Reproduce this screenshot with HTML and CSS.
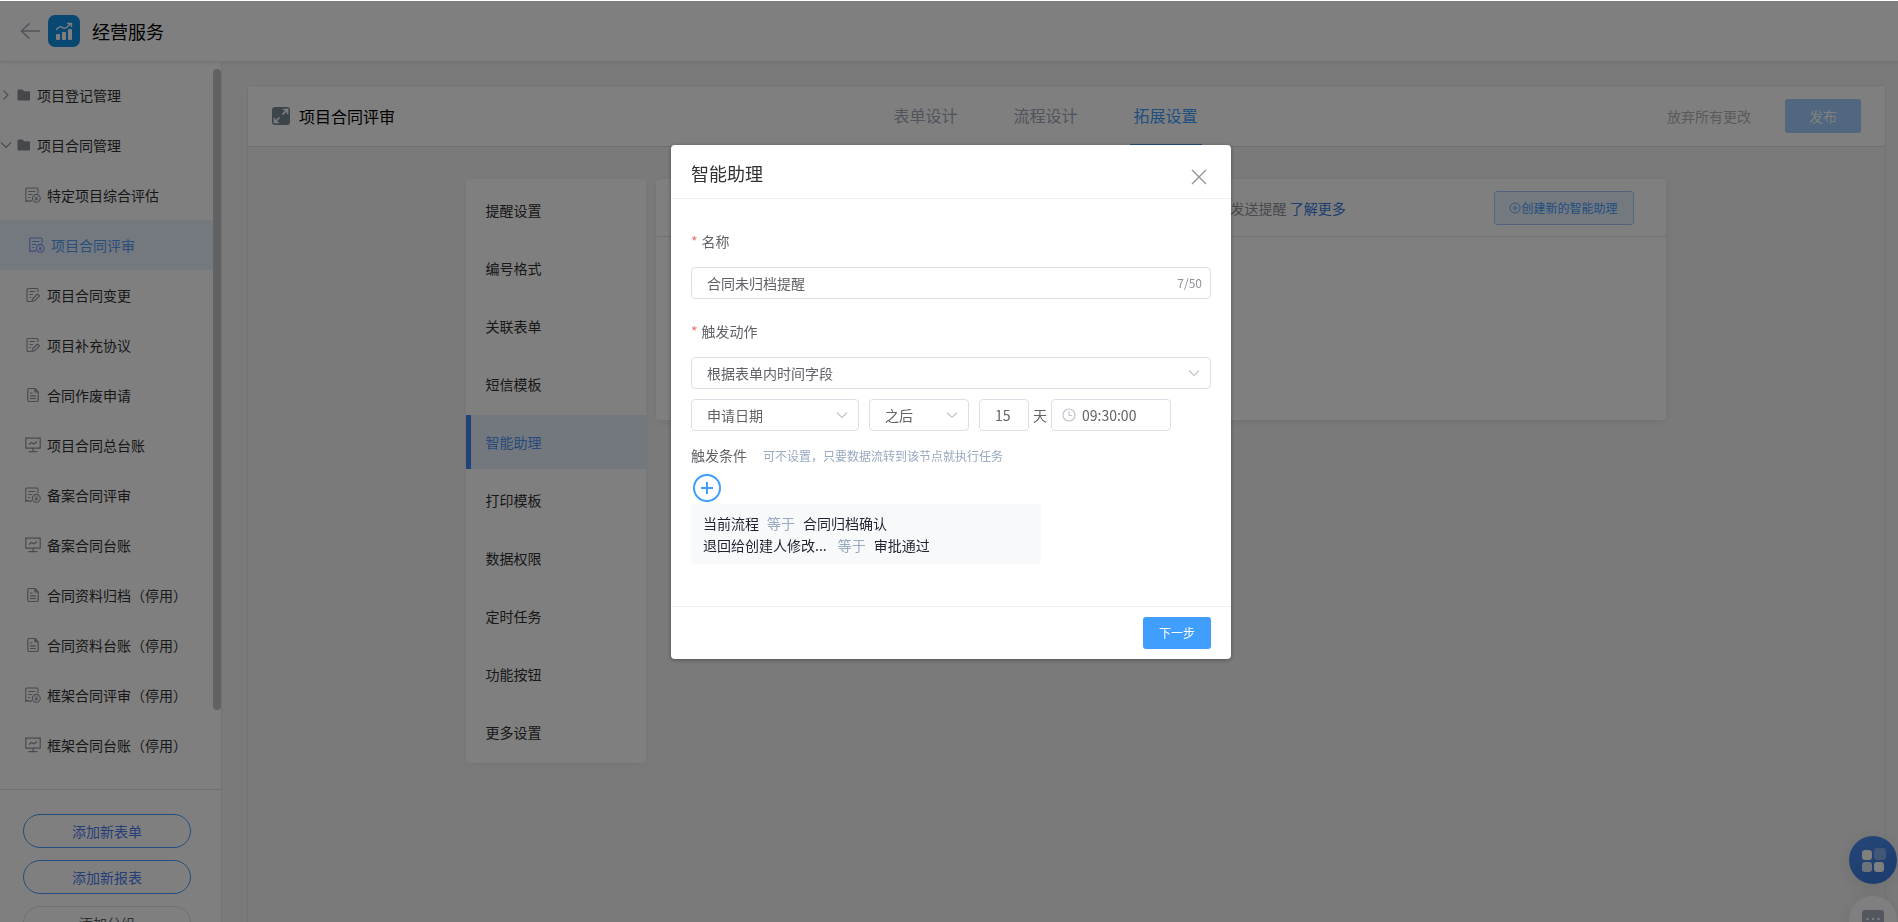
FILE: index.html
```html
<!DOCTYPE html>
<html lang="zh-CN">
<head>
<meta charset="utf-8">
<title>经营服务</title>
<link rel="stylesheet" href="styles.css">
</head>
<body>
<svg class="sprite" aria-hidden="true">
  <symbol id="i-folder" viewBox="0 0 14 14"><path fill="currentColor" d="M1 1.500h4.500l1.600 1.700H12q1 0 1 1V11.500q0 1-1 1H1.500q-1 0-1-1V2.500q0-1 1-1z"/></symbol>
  <symbol id="i-bill" viewBox="0 0 16 16"><g fill="none" stroke="currentColor" stroke-width="1.100"><path d="M13 6.500V2q0-1-1-1H1.800q-1 0-1 1v12.500l1.600-.8 1.600.8 1.600-.8 1.400.6M3.300 4.500h7M3.300 7.500h4M3.300 10.500h2"/><circle cx="11.300" cy="11.300" r="3.900"/><path d="M9.800 9.200l1.500 1.700 1.500-1.700M11.300 11v2.600M9.800 11.300h3M9.800 12.500h3" stroke-width=".8"/></g></symbol>
  <symbol id="i-edit" viewBox="0 0 16 16"><g fill="none" stroke="currentColor" stroke-width="1.100" stroke-linejoin="round"><path d="M13 5V2.500q0-1-1-1H3q-1 0-1 1v11q0 1 1 1h3.500M4.500 4.500H10M4.500 7.500H8M4.500 10.500H6"/><path d="M12.500 7l2 1.800-5 5-2.600.7.600-2.500z"/></g></symbol>
  <symbol id="i-doc" viewBox="0 0 16 16"><g fill="none" stroke="currentColor" stroke-width="1.200" stroke-linejoin="round"><path d="M10 1.500H4q-1.200 0-1.200 1.200v10.600q0 1.200 1.200 1.200h8q1.200 0 1.200-1.200V5zM10 1.500V5h3.200M5 6h2.500M5 8.800h6M5 11.500h6"/></g></symbol>
  <symbol id="i-board" viewBox="0 0 16 16"><g fill="none" stroke="currentColor" stroke-width="1.200"><path d="M.8 1.200h14.400v10H.8zM8 11.200v3.500M3.500 14.700h9M4 7.500l2.500-2 2.500 1.500 3-2.500"/></g></symbol>
  <symbol id="i-down" viewBox="0 0 12 12"><path fill="none" stroke="currentColor" stroke-width="1.200" d="M1 3.500l5 5 5-5"/></symbol>
  <symbol id="i-right" viewBox="0 0 12 12"><path fill="none" stroke="currentColor" stroke-width="1.100" d="M3.500 1.500L8 6l-4.500 4.500"/></symbol>
</svg>

<div class="app">
  <header class="topbar">
    <button class="back" aria-label="返回"><svg viewBox="0 0 22 18"><path fill="none" stroke="currentColor" stroke-width="1.500" d="M21 9H1.500M10 1L1.500 9l8.500 8"/></svg></button>
    <svg class="logo" viewBox="0 0 32 32" aria-hidden="true"><rect width="32" height="32" rx="7" fill="#1090e6"/><g fill="#fff"><rect x="8" y="19" width="4" height="6" rx="1"/><rect x="14" y="17" width="4" height="8" rx="1"/><rect x="20" y="14" width="4" height="11" rx="1"/></g><path d="M8 15q4-5 6.500-2.500T22.500 9M19 8.500h4.500V12" fill="none" stroke="#fff" stroke-width="1.300"/></svg>
    <h1>经营服务</h1>
  </header>

  <div class="body">
    <aside class="side">
      <nav class="tree">
        <a class="group" href="#"><svg class="arrow"><use href="#i-right"/></svg><svg class="fold"><use href="#i-folder"/></svg>项目登记管理</a>
        <a class="group" href="#"><svg class="arrow"><use href="#i-down"/></svg><svg class="fold"><use href="#i-folder"/></svg>项目合同管理</a>
        <a class="leaf" href="#"><svg><use href="#i-bill"/></svg>特定项目综合评估</a>
        <a class="leaf current" href="#"><svg><use href="#i-bill"/></svg>项目合同评审</a>
        <a class="leaf" href="#"><svg><use href="#i-edit"/></svg>项目合同变更</a>
        <a class="leaf" href="#"><svg><use href="#i-edit"/></svg>项目补充协议</a>
        <a class="leaf" href="#"><svg><use href="#i-doc"/></svg>合同作废申请</a>
        <a class="leaf" href="#"><svg><use href="#i-board"/></svg>项目合同总台账</a>
        <a class="leaf" href="#"><svg><use href="#i-bill"/></svg>备案合同评审</a>
        <a class="leaf" href="#"><svg><use href="#i-board"/></svg>备案合同台账</a>
        <a class="leaf" href="#"><svg><use href="#i-doc"/></svg>合同资料归档（停用）</a>
        <a class="leaf" href="#"><svg><use href="#i-doc"/></svg>合同资料台账（停用）</a>
        <a class="leaf" href="#"><svg><use href="#i-bill"/></svg>框架合同评审（停用）</a>
        <a class="leaf" href="#"><svg><use href="#i-board"/></svg>框架合同台账（停用）</a>
        <span class="thumb"></span>
      </nav>
      <div class="adders">
        <button>添加新表单</button>
        <button>添加新报表</button>
        <button class="plain">添加分组</button>
      </div>
    </aside>

    <main class="main">
      <section class="sheet">
        <header class="sheet-head">
          <div class="sheet-title">
            <svg viewBox="0 0 18 18" aria-hidden="true"><rect width="18" height="18" rx="3" fill="#7a8a99"/><path d="M10.500 7.500L15 3M11 2.500h4.500V7M7.500 10.500L3 15M2.500 11v4.500H7" fill="none" stroke="#fff" stroke-width="1.600"/></svg>
            <h2>项目合同评审</h2>
          </div>
          <nav class="tabs">
            <a href="#">表单设计</a><a href="#">流程设计</a><a class="on" href="#">拓展设置</a>
          </nav>
          <div class="sheet-actions">
            <button class="discard">放弃所有更改</button>
            <button class="publish">发布</button>
          </div>
        </header>
        <div class="content">
          <nav class="settings">
            <a href="#">提醒设置</a><a href="#">编号格式</a><a href="#">关联表单</a><a href="#">短信模板</a><a class="on" href="#">智能助理</a><a href="#">打印模板</a><a href="#">数据权限</a><a href="#">定时任务</a><a href="#">功能按钮</a><a href="#">更多设置</a>
          </nav>
          <section class="panel">
            <header>
              <p>发送提醒 <a href="#">了解更多</a></p>
              <button><svg viewBox="0 0 12 12" aria-hidden="true"><g fill="none" stroke="currentColor" stroke-width=".8"><circle cx="6" cy="6" r="5"/><path d="M6 3.500v5M3.500 6h5"/></g></svg>创建新的智能助理</button>
            </header>
          </section>
        </div>
      </section>
    </main>
  </div>

  <div class="floats">
    <button class="apps" aria-label="应用"><svg viewBox="0 0 48 48"><g fill="#fff"><rect x="13" y="14" width="10" height="10" rx="3"/><rect x="25" y="12" width="12" height="12" rx="3" opacity=".35"/><rect x="13" y="26" width="10" height="10" rx="3" opacity=".8"/><rect x="25" y="26" width="10" height="10" rx="3"/></g></svg></button>
    <button class="chat" aria-label="消息"><svg viewBox="0 0 48 48"><rect x="13" y="14" width="22" height="20" rx="3" fill="#a6aebf"/><g fill="#fff"><circle cx="18.500" cy="23" r="1.200"/><circle cx="24" cy="23" r="1.200"/><circle cx="29.500" cy="23" r="1.200"/></g></svg></button>
  </div>
</div>

<div class="mask">
  <form class="dialog" role="dialog" aria-labelledby="dlg-title">
    <header>
      <h2 id="dlg-title">智能助理</h2>
      <button type="button" class="close" aria-label="关闭"><svg viewBox="0 0 16 16"><path d="M1 1l14 14M15 1L1 15" fill="none" stroke="currentColor" stroke-width="1.400"/></svg></button>
    </header>
    <div class="fields">
      <label class="req" for="name">名称</label>
      <div class="box"><input id="name" type="text" maxlength="50" value="合同未归档提醒"><span class="count">7/50</span></div>
      <label class="req" for="action">触发动作</label>
      <div class="box"><select id="action"><option>根据表单内时间字段</option></select><svg class="caret"><use href="#i-down"/></svg></div>
      <div class="row">
        <div class="box date"><select aria-label="日期字段"><option>申请日期</option></select><svg class="caret"><use href="#i-down"/></svg></div>
        <div class="box when"><select aria-label="时机"><option>之后</option></select><svg class="caret"><use href="#i-down"/></svg></div>
        <div class="box days"><input id="days" type="text" value="15"></div>
        <label for="days">天</label>
        <div class="box time"><svg viewBox="0 0 14 14" aria-hidden="true"><g fill="none" stroke="currentColor" stroke-width="1.200"><circle cx="7" cy="7" r="6"/><path d="M7 3.500V7.500h3"/></g></svg><input type="text" aria-label="时间" value="09:30:00"></div>
      </div>
      <p class="cond-title">触发条件<small>可不设置，只要数据流转到该节点就执行任务</small></p>
      <button type="button" class="plus" aria-label="添加条件"><svg viewBox="0 0 28 28"><g fill="none" stroke="currentColor" stroke-width="2"><circle cx="14" cy="14" r="13"/><path d="M14 8v12M8 14h12"/></g></svg></button>
      <ul class="conds">
        <li>当前流程<i>等于</i>合同归档确认</li>
        <li>退回给创建人修改... <i>等于</i>审批通过</li>
      </ul>
    </div>
    <footer><button type="button" class="next">下一步</button></footer>
  </form>
</div>
</body>
</html>
```

FILE: styles.css
```css
* { box-sizing: border-box; margin: 0; padding: 0; }
html, body { height: 100%; overflow: hidden; }
body { font: 14px/20px "Noto Sans CJK SC", sans-serif; color: #303133; background: #dfe6e6; }
button, input, select { font: inherit; color: inherit; background: none; border: 0; }
a { color: inherit; text-decoration: none; }
h1, h2 { font-weight: 400; }
ul { list-style: none; }
svg { display: block; flex: none; }
.sprite { position: absolute; width: 0; height: 0; }

.app { height: 100vh; display: flex; flex-direction: column; background: #f5f5f5; }
.topbar { flex: none; height: 62px; display: flex; align-items: center; padding-left: 20px; background: #fff; border-bottom: 1px solid #e4e7ed; box-shadow: 0 1px 4px rgba(0, 0, 0, .08); z-index: 1; }
.back svg { width: 21px; height: 18px; }
.back { color: #a4a9b6; margin-right: 7px; }
.logo { width: 32px; height: 32px; margin-right: 12px; }
.topbar h1 { font-size: 18px; color: #000; }

.body { flex: 1; min-height: 0; display: flex; }
.side { flex: none; width: 222px; display: flex; flex-direction: column; background: #fff; border-right: 1px solid #e4e7ed; }
.tree { position: relative; flex: none; height: 728px; padding-top: 8px; border-bottom: 1px solid #dcdfe6; }
.tree a { display: flex; align-items: center; height: 50px; margin-right: 8px; }
.group .arrow { width: 12px; height: 12px; margin-right: 5px; color: #999; }
.group .fold { width: 14px; height: 14px; margin-right: 6px; color: #8b8f96; }
.leaf { padding-left: 25px; }
.leaf svg { width: 16px; height: 16px; margin-right: 6px; color: #90949c; }
.leaf.current { padding-left: 29px; background: #e8f0ff; color: #559cf5; }
.leaf.current svg { color: #7896ea; }
.thumb { position: absolute; right: 0; top: 7px; width: 8px; height: 641px; border-radius: 4px; background: #c4c4c4; }
.adders { display: flex; flex-direction: column; gap: 12px; padding: 24px 30px 0 23px; }
.adders button { height: 34px; flex: none; border: 1px solid #409eff; border-radius: 17px; color: #4a7cf0; }
.adders .plain { border-color: #dcdfe6; color: #606266; }

.main { flex: 1; min-width: 0; padding: 23px 12px 0 25px; }
.sheet { height: 100%; border: 1px solid #e4e7ed; border-bottom: 0; border-radius: 4px 4px 0 0; }
.sheet-head { display: grid; grid-template-columns: 1fr auto 1fr; align-items: center; height: 61px; padding: 0 24px; background: #fff; border-bottom: 1px solid #dcdfe6; }
.sheet-title { display: flex; align-items: center; gap: 9px; }
.sheet-title svg { width: 18px; height: 18px; }
.sheet-title h2 { font-size: 16px; color: #000; }
.tabs { display: flex; align-self: stretch; gap: 48px; padding-right: 42px; font-size: 16px; color: #a0a8b8; }
.tabs a { display: flex; align-items: center; padding: 0 4px; border-bottom: 2px solid transparent; }
.tabs .on { color: #409eff; border-color: #409eff; }
.sheet-actions { display: flex; justify-content: flex-end; gap: 34px; }
.discard { color: #b4b4b4; }
.publish { width: 76px; height: 34px; border-radius: 3px; background: #a0cfff; color: #fff; }
.content { display: flex; align-items: flex-start; gap: 10px; width: 1202px; max-width: 100%; margin: 32px auto 0; padding-right: 2px; }
.settings { flex: none; width: 180px; padding-top: 4px; background: #fff; border-radius: 4px; box-shadow: 0 2px 8px rgba(0, 0, 0, .05); }
.settings a { display: flex; align-items: center; height: 54px; margin-bottom: 4px; padding-left: 20px; }
.settings .on { padding-left: 15px; border-left: 5px solid #3a86f0; background: #e6f0ff; color: #5094f0; }
.panel { flex: 1; min-height: 241px; background: #fff; border-radius: 4px; box-shadow: 0 2px 8px rgba(0, 0, 0, .08); }
.panel header { display: flex; align-items: center; justify-content: space-between; height: 58px; padding: 0 32px 0 575px; border-bottom: 1px solid #dcdfe6; color: #909399; }
.panel p a { color: #3a78e0; }
.panel button { display: flex; align-items: center; justify-content: center; width: 140px; height: 34px; font-size: 12px; border: 1px solid #a6cbf5; border-radius: 3px; background: #e8f2ff; color: #409eff; }
.panel button svg { width: 12px; height: 12px; }

.floats { position: absolute; right: 1px; top: 836px; display: flex; flex-direction: column; gap: 12px; }
.floats button { width: 48px; height: 48px; border-radius: 50%; box-shadow: 0 4px 20px rgba(0, 0, 0, .1); }
.apps { background: linear-gradient(160deg, #4a8df0, #3a78dc); }
.chat { background: #fff; }

.mask { position: fixed; inset: 1px 0 0; z-index: 5; display: flex; justify-content: center; align-items: flex-start; padding: 144px 0 0 4px; background: rgba(0, 0, 0, .5); }
.dialog { width: 560px; background: #fff; border-radius: 4px; box-shadow: 0 1px 4px rgba(0, 0, 0, .35); color: #606266; }
.dialog header { display: flex; align-items: flex-start; justify-content: space-between; height: 54px; padding: 18px 24px 0 20px; border-bottom: 1px solid #f0f0f0; }
.dialog h2 { font-size: 18px; color: #303133; }
.close { padding-top: 6px; color: #909399; }
.close svg { width: 16px; height: 16px; }
.fields { padding: 20px 20px 42px; }
.fields > label { display: block; margin-bottom: 4px; line-height: 44px; }
.req::before { content: "*"; margin-right: 4px; color: #f56c6c; }
.box { position: relative; display: flex; align-items: center; height: 32px; border: 1px solid #dcdfe6; border-radius: 4px; }
.box input, .box select { flex: 1; min-width: 0; height: 30px; padding: 0 15px; appearance: none; outline: 0; }
.fields > .box { margin-bottom: 10px; }
.count { padding-right: 8px; font-size: 12px; color: #909399; }
.caret { position: absolute; right: 10px; width: 12px; height: 12px; color: #c0c4cc; pointer-events: none; }
.row { display: flex; align-items: center; }
.date { width: 168px; margin-right: 10px; }
.when { width: 100px; margin-right: 10px; }
.days { width: 50px; margin-right: 4px; }
.time { width: 120px; margin-left: 4px; padding-left: 10px; }
.time svg { width: 14px; height: 14px; color: #c0c4cc; }
.time input { padding: 0 6px; }
.cond-title { margin-top: 14px; }
.cond-title small { margin-left: 16px; font-size: 12px; color: #99a9bf; }
.plus { display: block; margin: 8px 0 2px 2px; color: #409eff; }
.plus svg { width: 28px; height: 28px; }
.conds { width: 350px; padding: 8px 12px; background: #f8f9fb; border-radius: 4px; line-height: 22px; color: #1f2330; }
.conds i { margin: 0 8px; font-style: normal; color: #99a9bf; }
.dialog footer { display: flex; justify-content: flex-end; align-items: center; height: 53px; padding: 0 20px; border-top: 1px solid #f0f0f0; }
.next { width: 68px; height: 32px; border-radius: 3px; font-size: 12px; background: #409eff; color: #fff; }
```
